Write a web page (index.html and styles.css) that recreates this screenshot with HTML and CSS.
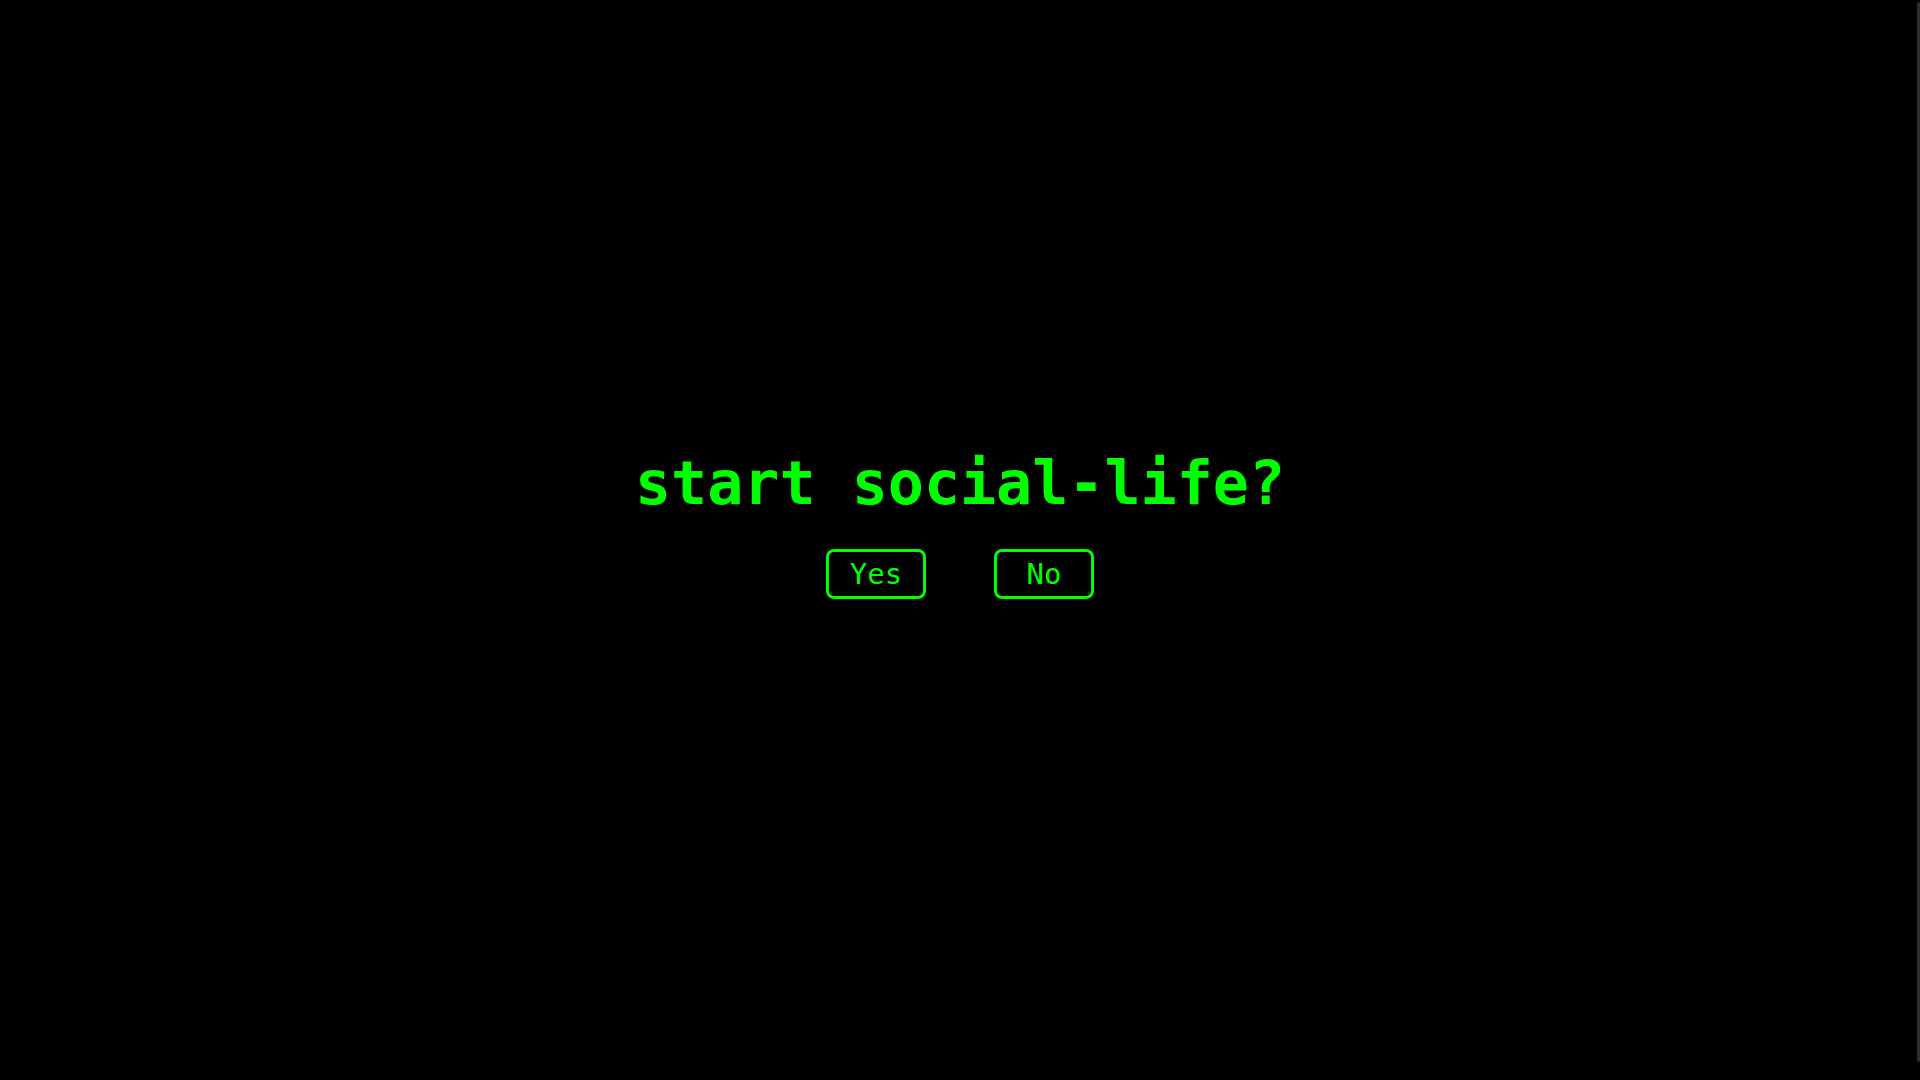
FILE: index.html
```html
<!DOCTYPE html>
<html lang="en">
<head>
<meta charset="utf-8">
<title>start social-life?</title>
<link rel="stylesheet" href="styles.css">
</head>
<body>
<main class="screen">
  <h1 class="prompt">start social-life?</h1>
  <div class="choices">
    <button class="choice" type="button">Yes</button>
    <button class="choice" type="button">No</button>
  </div>
</main>
<div class="scroll-thumb" aria-hidden="true"></div>
</body>
</html>
```
FILE: styles.css
```css
html, body {
  margin: 0;
  padding: 0;
  background: #000;
  height: 100%;
  overflow: hidden;
}

.screen {
  height: 100vh;
  display: flex;
  flex-direction: column;
  align-items: center;
  justify-content: center;
  padding-bottom: 33px;
  box-sizing: border-box;
  font-family: "DejaVu Sans Mono", "Liberation Mono", monospace;
  color: #00ff00;
}

.prompt {
  margin: 0 0 31px 0;
  font-size: 60px;
  font-weight: bold;
  line-height: 70px;
}

.choices {
  display: flex;
  gap: 68px;
}

.choice {
  font-family: "DejaVu Sans Mono", "Liberation Mono", monospace;
  font-size: 29px;
  line-height: normal;
  color: #00ff00;
  background: #000;
  border: 3px solid #00ff00;
  border-radius: 8px;
  padding: 4px 0;
  width: 100px;
  height: 50px;
  box-sizing: border-box;
  cursor: pointer;
}

.scroll-thumb {
  position: fixed;
  top: 2px;
  right: 0;
  width: 3px;
  height: 1060px;
  background: #2e2e2e;
  border-radius: 2px;
}
```
